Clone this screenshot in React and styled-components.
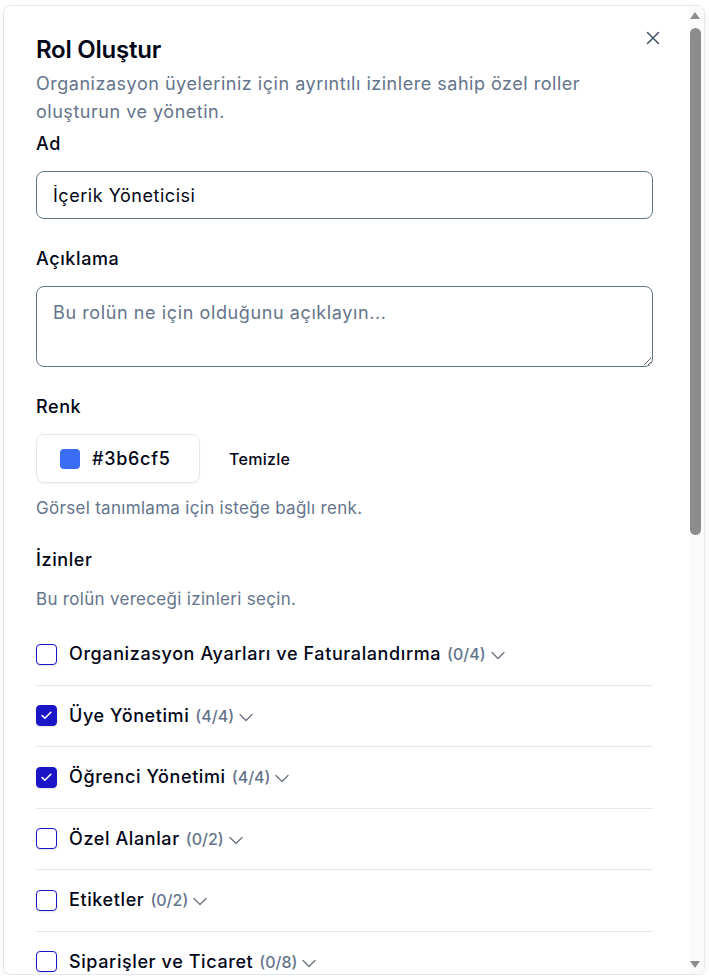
import React from "react";
import styled, { createGlobalStyle } from "styled-components";

const Global = createGlobalStyle`
  html, body { margin: 0; padding: 0; background: #ffffff; }
  body { font-family: Inter, "Noto Sans", "Liberation Sans", sans-serif; color: #020617; }
  * { box-sizing: border-box; }
`;

const Stage = styled.div`
  padding: 5px 4px 0 3px;
`;

const Dialog = styled.div`
  display: flex;
  width: 702px;
  height: 970px;
  overflow: hidden;
  background: #fff;
  border: 1px solid #e2e8f0;
  border-radius: 8px;
  box-shadow: 0 4px 10px rgba(15, 23, 42, 0.06);
`;

const Body = styled.div`
  position: relative;
  flex: 1;
  min-width: 0;
  overflow: hidden;
  padding: 28px 36px 32px 32px;
`;

const ScrollBar = styled.div`
  width: 15px;
  flex: none;
  display: flex;
  flex-direction: column;
  align-items: flex-start;
  background: #fafafa;
`;

const Arrow = styled.div`
  height: 20px;
  width: 15px;
  display: flex;
  justify-content: flex-start;
  align-items: ${(p) => (p.$down ? "flex-start" : "flex-start")};
  padding: ${(p) => (p.$down ? "7px 0 0 1px" : "6px 0 0 1px")};
  &::before {
    content: "";
    width: 0;
    height: 0;
    border-left: 5.5px solid transparent;
    border-right: 5.5px solid transparent;
    ${(p) =>
      p.$down
        ? "border-top: 7px solid #8c8c8c;"
        : "border-bottom: 7px solid #8c8c8c;"}
  }
`;

const Track = styled.div`
  flex: 1;
  width: 15px;
  padding: 2px 3px 0 1px;
`;

const Thumb = styled.div`
  height: 507px;
  border-radius: 6px;
  background: #8c8c8c;
`;

const Close = styled.button`
  position: absolute;
  top: 25px;
  right: 29px;
  width: 14px;
  height: 14px;
  padding: 0;
  border: 0;
  background: none;
  display: flex;
  color: #475569;
  cursor: pointer;
`;

const Title = styled.h2`
  margin: 0;
  font-size: 24px;
  line-height: 32px;
  font-weight: 600;
  letter-spacing: -0.01em;
  color: #020617;
`;

const Description = styled.p`
  margin: 4px 0 0;
  font-size: 18px;
  line-height: 28px;
  letter-spacing: 0.52px;
  color: #64748b;
`;

const Form = styled.div`
  display: flex;
  flex-direction: column;
  gap: 26px;
  margin-top: 4px;
`;

const Field = styled.div`
  display: flex;
  flex-direction: column;
  gap: 13px;
`;

const Label = styled.label`
  font-size: 18px;
  line-height: 28px;
  font-weight: 500;
  letter-spacing: 0.6px;
  color: #020617;
`;

const Input = styled.input`
  height: 48px;
  width: 100%;
  border: 1px solid #64748b;
  border-radius: 8px;
  padding: 0 16px;
  font: inherit;
  font-size: 18px;
  letter-spacing: 0.53px;
  color: #020617;
  outline: none;
`;

const TextArea = styled.textarea`
  height: 81px;
  width: 100%;
  border: 1px solid #64748b;
  border-radius: 8px;
  padding: 12px 16px;
  font: inherit;
  font-size: 18px;
  line-height: 28px;
  letter-spacing: 0.6px;
  color: #020617;
  outline: none;
  resize: vertical;
  display: block;
  &::placeholder { color: #64748b; }
`;

const ColorRow = styled.div`
  display: flex;
  align-items: center;
  gap: 13px;
`;

const ColorButton = styled.button`
  height: 49px;
  width: 164px;
  display: flex;
  align-items: center;
  gap: 12px;
  padding: 0 0 0 23px;
  background: #fff;
  border: 1px solid #e2e8f0;
  border-radius: 8px;
  box-shadow: 0 1px 2px rgba(15, 23, 42, 0.06);
  font: inherit;
  font-size: 18px;
  font-weight: 500;
  letter-spacing: 0.7px;
  color: #020617;
`;

const Swatch = styled.span`
  width: 20px;
  height: 20px;
  border-radius: 4px;
  background: ${(p) => p.$color};
`;

const GhostButton = styled.button`
  height: 40px;
  padding: 0 16px;
  background: none;
  border: 0;
  font: inherit;
  font-size: 16px;
  font-weight: 500;
  letter-spacing: 0.3px;
  color: #020617;
`;

const Hint = styled.p`
  margin: 0;
  font-size: 17px;
  line-height: 24px;
  letter-spacing: 0.3px;
  color: #64748b;
`;

const List = styled.div`
  display: flex;
  flex-direction: column;
`;

const Row = styled.div`
  display: flex;
  align-items: center;
  padding: 16px 0 16.5px;
  border-bottom: 1px solid #e2e8f0;
  &:last-child { border-bottom: 0; }
`;

const Box = styled.span`
  width: 21px;
  height: 21px;
  flex: none;
  border-radius: 4px;
  border: 1px solid #1a16c8;
  background: ${(p) => (p.$checked ? "#1a16c8" : "#fff")};
  box-shadow: 0 1px 2px rgba(15, 23, 42, 0.12);
  display: flex;
  align-items: center;
  justify-content: center;
  margin-right: 12px;
`;

const RowLabel = styled.span`
  font-size: 18px;
  line-height: 28px;
  font-weight: 500;
  letter-spacing: 0.6px;
  color: #020617;
`;

const Count = styled.span`
  margin-left: 6px;
  font-size: 16px;
  font-weight: 500;
  color: #64748b;
`;

const Chevron = styled.span`
  display: flex;
  margin-left: 5px;
  margin-top: 3px;
  color: #6b7280;
`;

const perms = [
  ["Organizasyon Ayarları ve Faturalandırma", "0/4", false],
  ["Üye Yönetimi", "4/4", true],
  ["Öğrenci Yönetimi", "4/4", true],
  ["Özel Alanlar", "0/2", false],
  ["Etiketler", "0/2", false],
  ["Siparişler ve Ticaret", "0/8", false],
];

const XIcon = () => (
  <svg width="14" height="14" viewBox="0 0 14 14" fill="none" stroke="currentColor" strokeWidth="1.6" strokeLinecap="round">
    <path d="M1.5 1.5 L12.5 12.5 M12.5 1.5 L1.5 12.5" />
  </svg>
);

const Check = () => (
  <svg width="13" height="13" viewBox="0 0 24 24" fill="none" stroke="#fff" strokeWidth="3" strokeLinecap="round" strokeLinejoin="round">
    <path d="M20 6 9 17l-5-5" />
  </svg>
);

const Down = () => (
  <svg width="14" height="9" viewBox="0 0 14 9" fill="none" stroke="currentColor" strokeWidth="1.3" strokeLinecap="round" strokeLinejoin="round">
    <path d="M1 1.5 L7 7.5 L13 1.5" />
  </svg>
);

export default function App() {
  return (
    <>
      <Global />
      <Stage>
        <Dialog>
          <Body>
            <Close aria-label="Kapat"><XIcon /></Close>
            <Title>Rol Oluştur</Title>
            <Description>
              Organizasyon üyeleriniz için ayrıntılı izinlere sahip özel roller oluşturun ve yönetin.
            </Description>
            <Form>
              <Field>
                <Label>Ad</Label>
                <Input defaultValue="İçerik Yöneticisi" />
              </Field>
              <Field>
                <Label>Açıklama</Label>
                <TextArea placeholder="Bu rolün ne için olduğunu açıklayın..." />
              </Field>
              <Field>
                <Label>Renk</Label>
                <ColorRow>
                  <ColorButton>
                    <Swatch $color="#3b6cf5" />
                    #3b6cf5
                  </ColorButton>
                  <GhostButton>Temizle</GhostButton>
                </ColorRow>
                <Hint>Görsel tanımlama için isteğe bağlı renk.</Hint>
              </Field>
              <Field>
                <Label>İzinler</Label>
                <Hint>Bu rolün vereceği izinleri seçin.</Hint>
                <List>
                  {perms.map(([name, count, checked]) => (
                    <Row key={name}>
                      <Box $checked={checked}>{checked && <Check />}</Box>
                      <RowLabel>{name}</RowLabel>
                      <Count>({count})</Count>
                      <Chevron><Down /></Chevron>
                    </Row>
                  ))}
                </List>
              </Field>
            </Form>
          </Body>
          <ScrollBar aria-hidden="true">
            <Arrow />
            <Track>
              <Thumb />
            </Track>
            <Arrow $down />
          </ScrollBar>
        </Dialog>
      </Stage>
    </>
  );
}
